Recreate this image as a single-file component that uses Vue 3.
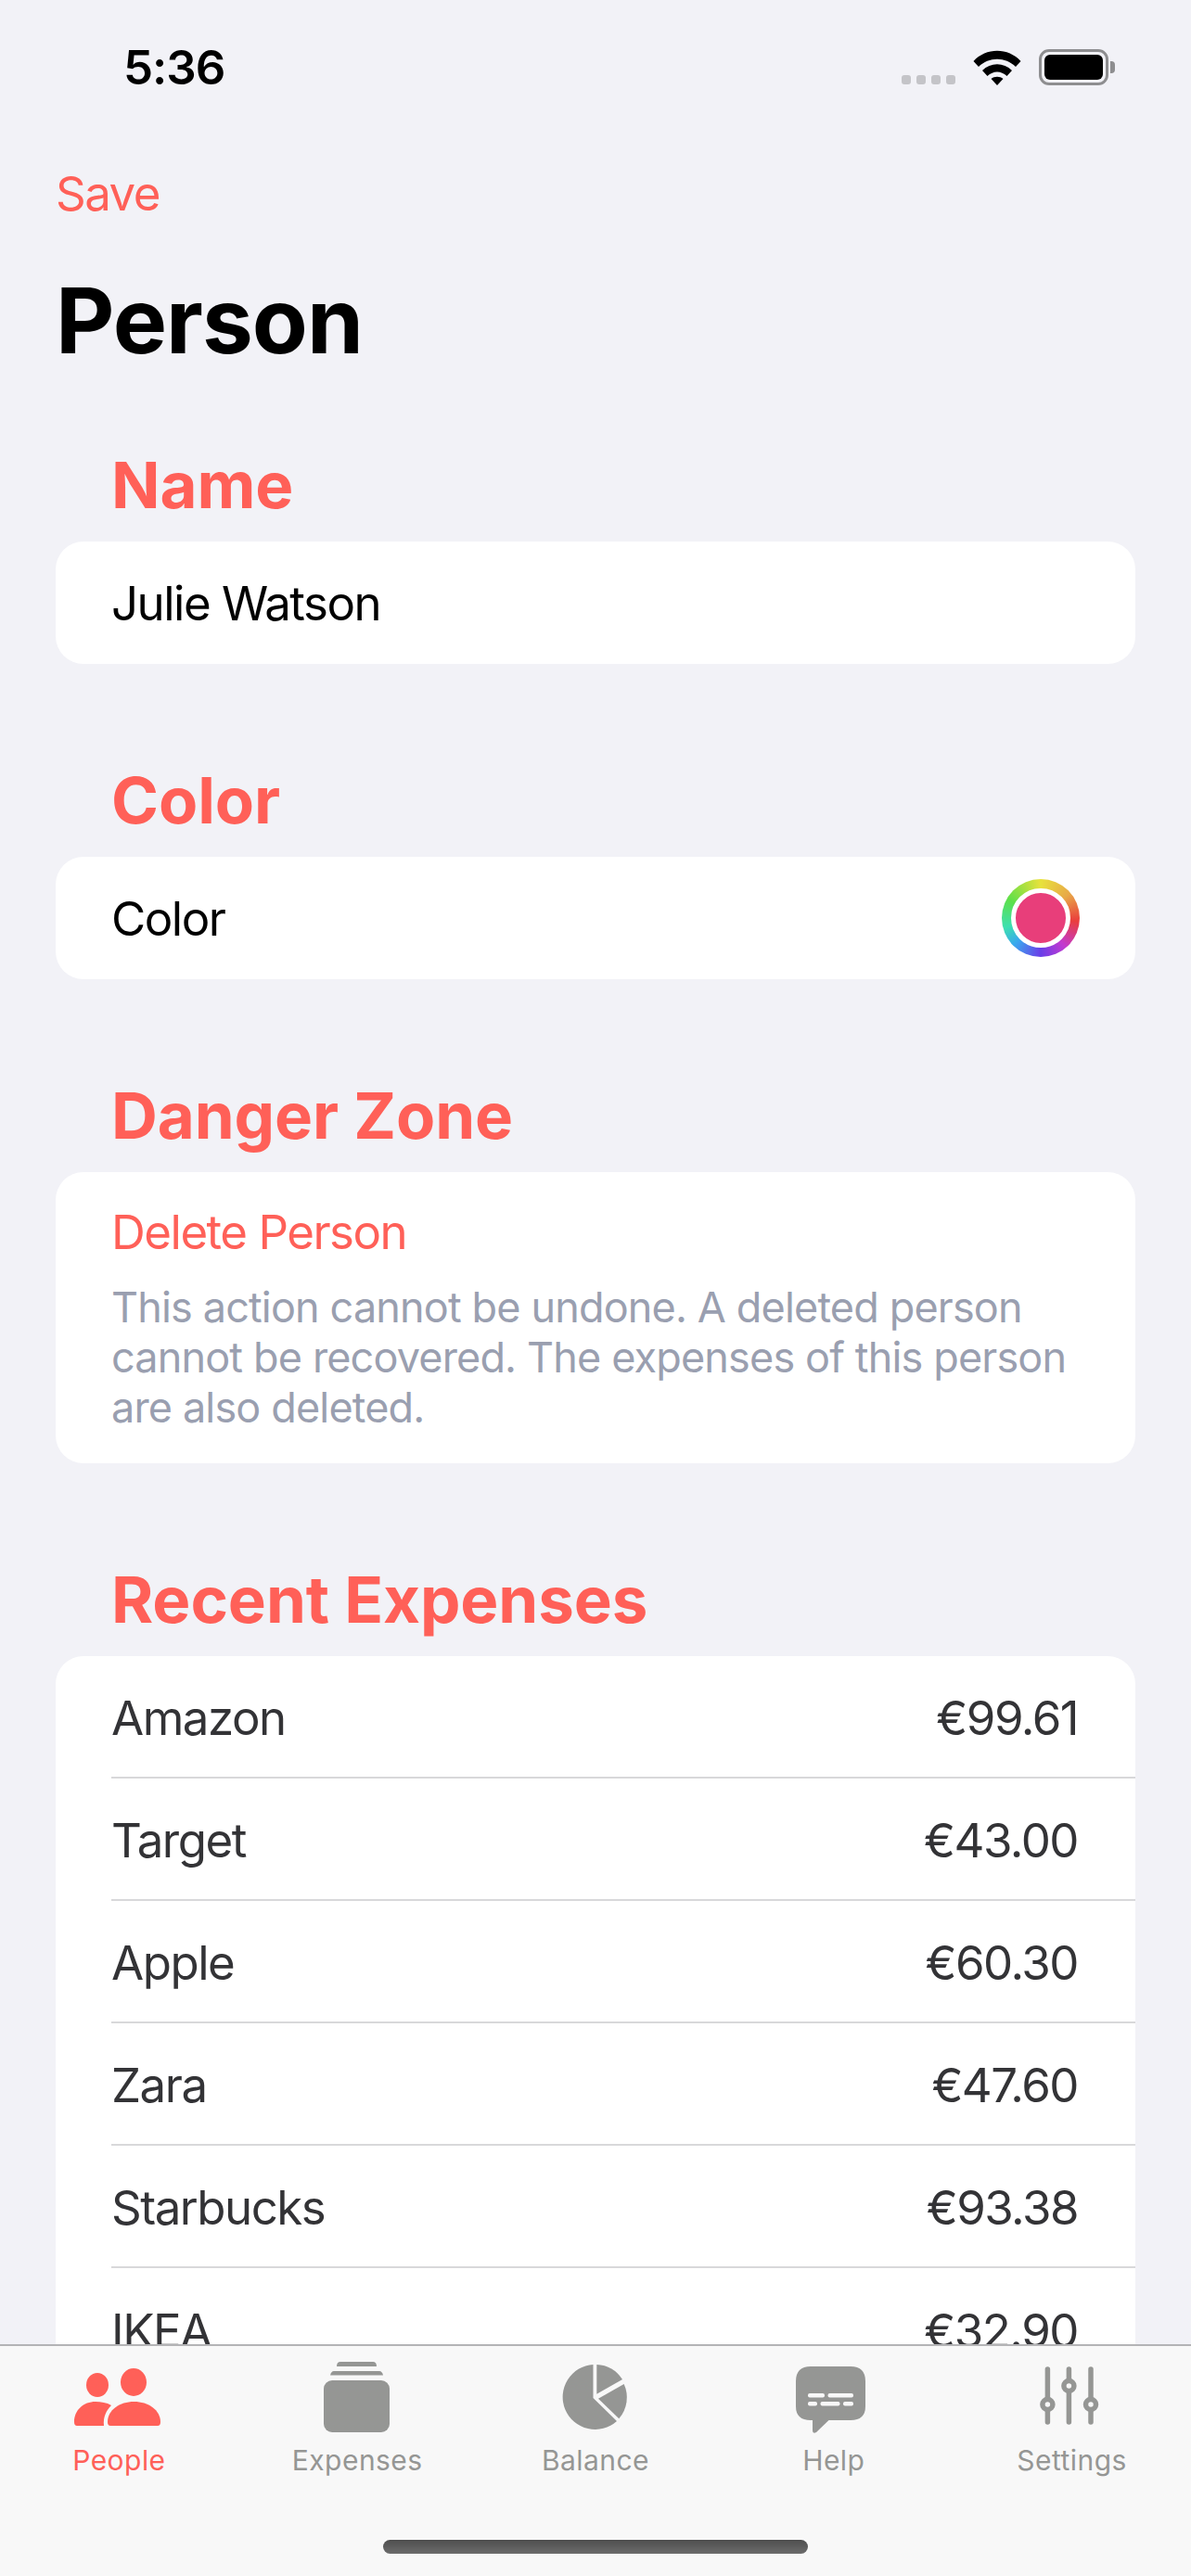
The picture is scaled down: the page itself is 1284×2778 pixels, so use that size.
<template>
  <div class="phone">
    <div class="status-bar">
      <span class="time">5:36</span>
      <div class="status-icons">
        <div class="signal">
          <span v-for="i in 4" :key="i" class="signal-dot"></span>
        </div>
        <svg class="wifi" width="52" height="38" viewBox="0 0 52 38">
          <path d="M0.5 12 C14 -3 38 -3 51.500 12 L46 18 C35 7 17 7 6 18 Z" fill="#000" />
          <path d="M10 22 C19 13 33 13 42 22 L36.500 28 C30 22 22 22 15.500 28 Z" fill="#000" />
          <path d="M19.500 31 C23 28 29 28 32.500 31 L26 38 Z" fill="#000" />
        </svg>
        <div class="battery">
          <div class="battery-body"><div class="battery-fill"></div></div>
          <div class="battery-cap"></div>
        </div>
      </div>
    </div>

    <div class="content">
      <div class="nav-link">Save</div>
      <h1 class="page-title">Person</h1>

      <h2 class="section-title first">Name</h2>
      <div class="card">
        <div class="row"><span class="row-text">Julie Watson</span></div>
      </div>

      <h2 class="section-title">Color</h2>
      <div class="card">
        <div class="row">
          <span class="row-text">Color</span>
          <div class="color-well"><div class="color-dot"></div></div>
        </div>
      </div>

      <h2 class="section-title">Danger Zone</h2>
      <div class="card danger-card">
        <div class="delete-link">Delete Person</div>
        <p class="danger-note">This action cannot be undone. A deleted person cannot be recovered. The expenses of this person are also deleted.</p>
      </div>

      <h2 class="section-title">Recent Expenses</h2>
      <div class="card">
        <div v-for="item in expenses" :key="item.name" class="row expense-row">
          <span class="expense-text">{{ item.name }}</span>
          <span class="expense-text">{{ item.amount }}</span>
        </div>
      </div>
    </div>

    <div class="tab-bar">
      <div class="tabs">
        <div class="tab active">
          <svg class="tab-icon" viewBox="0 0 100 80">
            <ellipse cx="27" cy="26" rx="12" ry="13" />
            <ellipse cx="66" cy="23" rx="14" ry="15" />
            <path d="M41 70 Q38 70 38 66 C38 53 51 44 66.500 44 C82 44 95 53 95 66 Q95 70 92 70 Z" />
            <path d="M5 70 Q2 70 2 66 C2 53 12 44 25 44 C31 44 37 45 42 48 C37 53 33 60 34 70 Z" />
          </svg>
          <span class="tab-label">People</span>
        </div>
        <div class="tab">
          <svg class="tab-icon" viewBox="0 0 100 80">
            <rect x="14" y="21" width="71" height="56" rx="9" />
            <path d="M21 15.500 Q22 11 25 11 L74 11 Q77 11 78 15.500 Z" />
            <path d="M28 6 Q28 1 32 1 L67 1 Q71 1 71 6 Z" />
          </svg>
          <span class="tab-label">Expenses</span>
        </div>
        <div class="tab">
          <svg class="tab-icon" viewBox="0 0 100 80">
            <path d="M47.500 4 L47.500 40 L73 65 A35 35 0 1 1 47.500 4 Z" />
            <path d="M51.300 4 A35 35 0 0 1 79 20 L51.300 35.700 Z" />
            <path d="M80.700 25 A35 35 0 0 1 75.300 62.300 L53 40.700 Z" />
          </svg>
          <span class="tab-label">Balance</span>
        </div>
        <div class="tab">
          <svg class="tab-icon" viewBox="0 0 100 80">
            <path d="M25 6 L68 6 Q84 6 84 22 L84 49 Q84 64 68 64 L44.500 64 L31 77 Q27 79 27 75 L27 64 L25 64 Q9 64 9 49 L9 22 Q9 6 25 6 Z" />
            <g fill="#f8f8f8">
              <rect x="22" y="35" width="18" height="4.500" rx="2" />
              <rect x="43.500" y="35" width="27.500" height="4.500" rx="2" />
              <rect x="22" y="44" width="10" height="4.500" rx="2" />
              <rect x="35.500" y="44" width="21" height="4.500" rx="2" />
              <rect x="60" y="44" width="11" height="4.500" rx="2" />
            </g>
          </svg>
          <span class="tab-label">Help</span>
        </div>
        <div class="tab">
          <svg class="tab-icon sliders" viewBox="0 0 100 80">
            <path d="M23.400 9 V66 M46.400 9 V66 M70 9 V66" />
            <circle cx="23.400" cy="47" r="5.500" />
            <circle cx="46.400" cy="27" r="5.500" />
            <circle cx="70" cy="47" r="5.500" />
          </svg>
          <span class="tab-label">Settings</span>
        </div>
      </div>
      <div class="home-indicator"></div>
    </div>
  </div>
</template>

<script setup>
const expenses = [
  { name: 'Amazon', amount: '€99.61' },
  { name: 'Target', amount: '€43.00' },
  { name: 'Apple', amount: '€60.30' },
  { name: 'Zara', amount: '€47.60' },
  { name: 'Starbucks', amount: '€93.38' },
  { name: 'IKEA', amount: '€32.90' }
]
</script>

<style>
html, body {
  margin: 0;
  background: #f2f2f7;
}
</style>

<style scoped>
.phone {
  position: relative;
  width: 1284px;
  height: 2778px;
  overflow: hidden;
  background: #f2f2f7;
  font-family: Inter, "Liberation Sans", sans-serif;
  color: #000;
}

.status-bar {
  display: flex;
  justify-content: space-between;
  height: 132px;
  padding: 0 82px 0 133px;
  box-sizing: border-box;
}

.time {
  font-size: 51px;
  font-weight: 600;
  line-height: 62px;
  letter-spacing: -1px;
  margin-top: 42px;
  height: 62px;
}

.status-icons {
  display: flex;
  align-items: flex-start;
  padding-top: 53px;
}

.signal {
  display: flex;
  gap: 6px;
  margin-top: 28px;
  margin-right: 19px;
}

.signal-dot {
  width: 10px;
  height: 10px;
  border-radius: 3px;
  background: #c4c4c8;
}

.wifi {
  margin-right: 19px;
  margin-top: 1px;
}

.battery {
  display: flex;
  align-items: center;
}

.battery-body {
  width: 75px;
  height: 39px;
  box-sizing: border-box;
  border: 3px solid #8e8e90;
  border-radius: 11px;
  padding: 3px;
  background: #f2f2f7;
}

.battery-fill {
  height: 100%;
  background: #000;
  border-radius: 6px;
}

.battery-cap {
  width: 5px;
  height: 13px;
  margin-left: 2px;
  background: #8e8e90;
  border-radius: 0 4px 4px 0;
}

.content {
  padding: 0 60px;
}

.nav-link {
  color: #ff6058;
  font-size: 51px;
  line-height: 62px;
  letter-spacing: -1.5px;
  margin-top: 46px;
}

.page-title {
  margin: 46px 0 0;
  font-size: 98px;
  font-weight: 700;
  line-height: 120px;
  letter-spacing: -1px;
}

.section-title {
  margin: 107px 0 21px;
  padding-left: 60px;
  color: #ff6058;
  font-size: 69px;
  font-weight: 700;
  line-height: 80px;
  letter-spacing: -0.1px;
}

.section-title.first {
  margin-top: 77px;
}

.card {
  background: #fff;
  border-radius: 30px;
  overflow: hidden;
}

.row {
  display: flex;
  align-items: center;
  justify-content: space-between;
  height: 132px;
  padding: 0 60px;
  box-sizing: border-box;
}

.row-text {
  font-size: 51px;
  letter-spacing: -1.5px;
  color: #000;
}

.expense-row {
  margin-left: 60px;
  padding: 2px 62px 0 0;
  border-bottom: 2px solid #d8d8da;
}

.expense-row:last-child {
  border-bottom: 0;
}

.expense-text {
  font-size: 51px;
  letter-spacing: -1.5px;
  color: #333336;
}

.color-well {
  display: flex;
  align-items: center;
  justify-content: center;
  width: 84px;
  height: 84px;
  border-radius: 50%;
  background: conic-gradient(#e8e23c 0deg, #e8a848 50deg, #ea3d3d 95deg, #c23ad0 140deg, #6a3ee8 180deg, #3aa8ee 225deg, #3de0b0 255deg, #5ee04a 300deg, #b0e040 335deg, #e8e23c 360deg);
}

.color-dot {
  width: 54px;
  height: 54px;
  border-radius: 50%;
  background: #e83e7a;
  border: 5px solid #fff;
}

.danger-card {
  padding: 35px 60px 33px;
}

.delete-link {
  color: #ff6058;
  font-size: 51px;
  line-height: 60px;
  letter-spacing: -1.5px;
}

.danger-note {
  margin: 24px 0 0;
  color: #9a9fb0;
  font-size: 45px;
  line-height: 54px;
  letter-spacing: -0.85px;
}

.tab-bar {
  position: absolute;
  left: 0;
  right: 0;
  bottom: 0;
  height: 250px;
  box-sizing: border-box;
  border-top: 2px solid #b4b4b6;
  background: #f8f8f8;
}

.tabs {
  display: grid;
  grid-template-columns: repeat(5, 1fr);
  padding-top: 16px;
}

.tab {
  display: flex;
  flex-direction: column;
  align-items: center;
}

.tab-icon {
  width: 100px;
  height: 80px;
  fill: #959694;
}

.tab.active .tab-icon {
  fill: #ff6058;
}

.sliders {
  fill: #f8f8f8;
  stroke: #959694;
  stroke-width: 5.5;
  stroke-linecap: round;
}

.tab-label {
  font-size: 30px;
  line-height: 36px;
  letter-spacing: 0.45px;
  margin-top: 9px;
  color: #959694;
}

.tab.active .tab-label {
  color: #ff6058;
}

.home-indicator {
  position: absolute;
  left: 413px;
  top: 209px;
  width: 458px;
  height: 15px;
  border-radius: 8px;
  background: linear-gradient(#4e4e4e, #6c6c6c);
}
</style>
